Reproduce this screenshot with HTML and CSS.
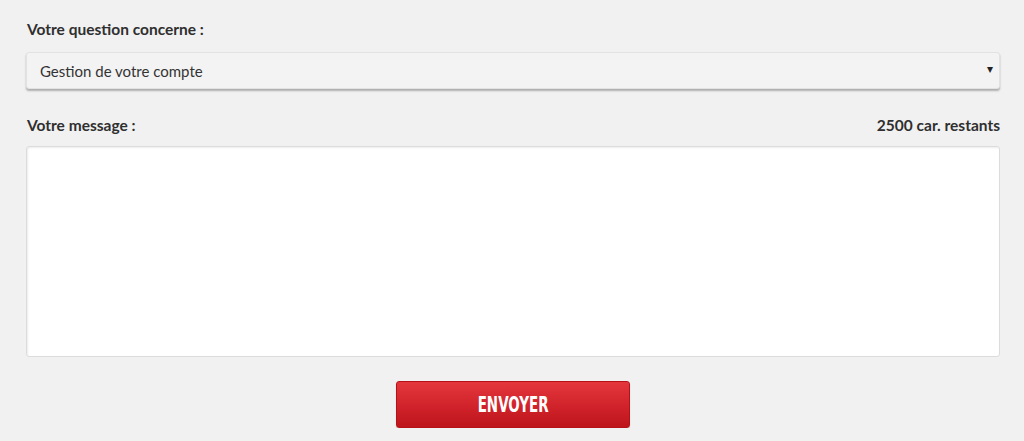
FILE: index.html
```html
<!DOCTYPE html>
<html lang="fr">

<head>
    <meta charset="UTF-8">
    <meta name="viewport" content="width=device-width, initial-scale=1.0">
    <title>Contact</title>
    <link rel="stylesheet" href="styles.css">
</head>

<body>
    <!-- Contact form -->
    <div class="contact-form">
        <label class="field-label" for="subject">Votre question concerne :</label>
        <div class="select-box">
            <select id="subject">
                <option>Gestion de votre compte</option>
            </select>
            <span class="select-arrow">&#9662;</span>
        </div>

        <div class="message-head">
            <label class="field-label" for="message">Votre message :</label>
            <span class="counter">2500 car. restants</span>
        </div>
        <textarea id="message"></textarea>

        <div class="actions">
            <button class="send-btn"><span>ENVOYER</span></button>
        </div>
    </div>
</body>

</html>
```

FILE: styles.css
```css
body {
    margin: 0;
    padding: 0;
    background: #f1f1f1;
    font-family: Lato, "Open Sans", Arial, sans-serif;
    color: #333;
}

.contact-form {
    padding: 19px 24px 0 26px;
}

.field-label {
    display: block;
    font-size: 15.5px;
    font-weight: bold;
    color: #2f2f2f;
    padding-left: 1px;
    line-height: 20px;
}

.select-box {
    position: relative;
    margin-top: 13px;
    height: 35px;
    background: #f3f3f3;
    border: 1px solid #e2e2e2;
    border-radius: 3px;
    box-shadow: 0 2px 2px rgba(0, 0, 0, 0.28);
}

.select-box select {
    appearance: none;
    -webkit-appearance: none;
    width: 100%;
    height: 100%;
    border: none;
    background: transparent;
    padding: 0 13px;
    font-family: Lato, "Open Sans", Arial, sans-serif;
    font-size: 15px;
    color: #333;
    outline: none;
}

.select-arrow {
    position: absolute;
    right: 6px;
    top: 8px;
    font-size: 12px;
    color: #222;
    pointer-events: none;
}

.message-head {
    display: flex;
    justify-content: space-between;
    align-items: center;
    margin-top: 26px;
}

.counter {
    font-size: 15.5px;
    font-weight: bold;
    color: #2f2f2f;
}

textarea {
    display: block;
    box-sizing: border-box;
    width: 100%;
    height: 211px;
    margin-top: 11px;
    background: #fff;
    border: 1px solid #dcdcdc;
    border-radius: 3px;
    box-shadow: inset 1px 1px 2px rgba(0, 0, 0, 0.08);
    resize: none;
    outline: none;
}

.actions {
    display: flex;
    justify-content: center;
    margin-top: 24px;
}

.send-btn {
    width: 234px;
    height: 47px;
    border: 1px solid #b51218;
    border-radius: 3px;
    background: linear-gradient(to bottom, #e4373c 0%, #d0222a 55%, #bd151b 100%);
    box-shadow: 0 1px 1px rgba(0, 0, 0, 0.2);
    color: #fff;
    font-family: "DejaVu Sans", sans-serif;
    font-stretch: condensed;
    font-weight: bold;
    font-size: 22px;
}

.send-btn span {
    display: inline-block;
    transform: scaleX(0.68);
}
```
